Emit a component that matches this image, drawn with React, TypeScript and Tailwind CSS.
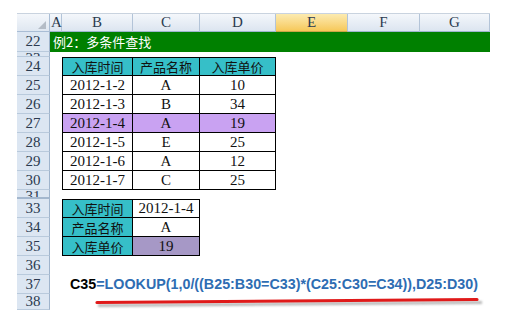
import type { ReactNode } from 'react';

const serif = "font-['Liberation_Serif',serif] text-[15px]";
const cjk = "font-['Noto_Sans_CJK_SC',sans-serif] text-[13px]";

type RowProps = {
  num: string;
  h: string;
  clip?: boolean;
  thick?: boolean;
  children?: ReactNode;
};

function Row({ num, h, clip, thick, children }: RowProps) {
  return (
    <div className={`flex ${h}`}>
      <div
        className={`flex w-[33px] shrink-0 justify-center overflow-hidden border-r border-r-[#9fb4cc] bg-[#dce6f2] font-['Liberation_Serif',serif] text-[15px] text-[#2b3a4f] ${
          clip ? 'items-start leading-[12px]' : 'items-center leading-none'
        } ${thick ? 'border-b-2 border-b-[#a3b7ce]' : 'border-b border-b-[#b9cadc]'}`}
      >
        {num}
      </div>
      <div className="flex w-[440px] shrink-0 bg-white">{children}</div>
    </div>
  );
}

function Cell({
  w,
  bg = 'bg-white',
  first,
  top,
  children,
  font = serif,
}: {
  w: string;
  bg?: string;
  first?: boolean;
  top?: boolean;
  children?: ReactNode;
  font?: string;
}) {
  return (
    <div
      className={`flex ${w} items-center justify-center border-r border-b border-black leading-none text-[#111] ${bg} ${font} ${
        first ? 'border-l' : ''
      } ${top ? 'border-t' : ''}`}
    >
      {children}
    </div>
  );
}

const data = [
  ['25', '2012-1-2', 'A', '10'],
  ['26', '2012-1-3', 'B', '34'],
  ['27', '2012-1-4', 'A', '19'],
  ['28', '2012-1-5', 'E', '25'],
  ['29', '2012-1-6', 'A', '12'],
  ['30', '2012-1-7', 'C', '25'],
];

const cols = [
  { k: 'A', w: 'w-[12px]', cls: 'justify-start pl-[1px]' },
  { k: 'B', w: 'w-[71px]', cls: 'justify-center' },
  { k: 'C', w: 'w-[67px]', cls: 'justify-center' },
  { k: 'D', w: 'w-[76px]', cls: 'justify-center' },
  { k: 'E', w: 'w-[72px]', cls: 'justify-center' },
  { k: 'F', w: 'w-[72px]', cls: 'justify-center' },
  { k: 'G', w: 'w-[70px]', cls: 'justify-center' },
];

export default function App() {
  return (
    <div className="h-[319px] w-[523px] overflow-hidden bg-white pl-[17px] pt-[13px]">
      <div className="w-[473px]">
        {/* column headers */}
        <div className="flex h-[19px] border-t border-t-[#c9d3df]">
          <div className="relative w-[33px] shrink-0 border-r border-b border-[#a9bdd5] bg-gradient-to-b from-[#f4f7fb] to-[#dfe7f1]">
            <div className="absolute right-[3px] bottom-[2px] h-0 w-0 border-b-[8px] border-l-[8px] border-b-[#b4bcc6] border-l-transparent" />
          </div>
          {cols.map((c) => (
            <div
              key={c.k}
              className={`flex ${c.w} ${c.cls} items-center border-r border-b border-r-[#b3c4d8] border-b-[#9eb6ce] font-['Liberation_Serif',serif] text-[15px] leading-none text-[#2c3b4f] ${
                c.k === 'E'
                  ? 'bg-gradient-to-b from-[#fcebb0] to-[#f6c857] border-b-[#c9a548]'
                  : 'bg-gradient-to-b from-[#f4f7fb] to-[#dce5f0]'
              }`}
            >
              {c.k}
            </div>
          ))}
        </div>

        <Row num="22" h="h-[20px]">
          <div className={`flex w-full items-center bg-[#008000] pl-[3px] text-white ${cjk} text-[13.5px]`}>
            例2：多条件查找
          </div>
        </Row>
        <Row num="23" h="h-[5px]" clip />

        <Row num="24" h="h-[19px]">
          <div className="w-[12px]" />
          <Cell w="w-[71px]" bg="bg-[#36bfc8]" first top font={cjk}>
            入库时间
          </Cell>
          <Cell w="w-[67px]" bg="bg-[#36bfc8]" top font={cjk}>
            产品名称
          </Cell>
          <Cell w="w-[76px]" bg="bg-[#36bfc8]" top font={cjk}>
            入库单价
          </Cell>
        </Row>

        {data.map(([n, d, p, v]) => {
          const bg = n === '27' ? 'bg-[#c9a2f2]' : 'bg-white';
          return (
            <Row key={n} num={n} h="h-[19px]">
              <div className="w-[12px]" />
              <Cell w="w-[71px]" bg={bg} first>
                {d}
              </Cell>
              <Cell w="w-[67px]" bg={bg}>
                {p}
              </Cell>
              <Cell w="w-[76px]" bg={bg}>
                {v}
              </Cell>
            </Row>
          );
        })}

        <Row num="31" h="h-[9px]" clip thick />

        <Row num="33" h="h-[19px]">
          <div className="w-[12px]" />
          <Cell w="w-[71px]" bg="bg-[#36bfc8]" first top font={cjk}>
            入库时间
          </Cell>
          <Cell w="w-[67px]" top>
            2012-1-4
          </Cell>
        </Row>
        <Row num="34" h="h-[19px]">
          <div className="w-[12px]" />
          <Cell w="w-[71px]" bg="bg-[#36bfc8]" first font={cjk}>
            产品名称
          </Cell>
          <Cell w="w-[67px]">A</Cell>
        </Row>
        <Row num="35" h="h-[19px]">
          <div className="w-[12px]" />
          <Cell w="w-[71px]" bg="bg-[#36bfc8]" first font={cjk}>
            入库单价
          </Cell>
          <Cell w="w-[67px]" bg="bg-[#a698c6]">
            19
          </Cell>
        </Row>
        <Row num="36" h="h-[19px]" />
        <Row num="37" h="h-[19px]">
          <div className="flex items-center whitespace-nowrap pl-[20px] font-['Liberation_Sans',Arial,sans-serif] text-[14.3px] leading-none font-bold">
            <span className="text-black">C35</span>
            <span className="text-[#2e6db3]">
              =LOOKUP(1,0/((B25:B30=C33)*(C25:C30=C34)),D25:D30)
            </span>
          </div>
        </Row>
        <Row num="38" h="h-[16px]">
          <svg width="392" height="14" className="mt-[3px] ml-[46px] overflow-visible">
            <defs>
              <filter id="sh" x="-5%" y="-100%" width="110%" height="300%">
                <feGaussianBlur stdDeviation="1.2" />
              </filter>
            </defs>
            <path d="M2 8.5 Q190 7 386 5.5" stroke="#8a8a8a" strokeWidth="3" fill="none" opacity="0.6" filter="url(#sh)" />
            <path d="M1 5.5 Q190 4 381 2.5" stroke="#e01a1a" strokeWidth="3.2" fill="none" strokeLinecap="round" />
          </svg>
        </Row>
      </div>
    </div>
  );
}
